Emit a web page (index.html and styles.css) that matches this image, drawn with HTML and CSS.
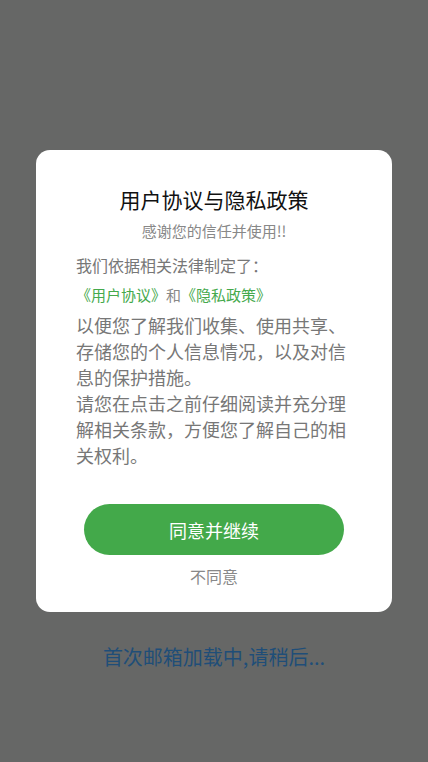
FILE: index.html
```html
<!DOCTYPE html>
<html lang="zh">

<head>
    <meta charset="utf-8">
    <meta name="viewport" content="width=device-width, initial-scale=1.0">
    <title>用户协议与隐私政策</title>
    <link rel="stylesheet" href="styles.css">
</head>

<body>
    <main class="skaerm">
        <section class="dialog">
            <h1>用户协议与隐私政策</h1>
            <p class="tak">感谢您的信任并使用!!</p>
            <div class="tekst">
                <p class="intro">我们依据相关法律制定了：</p>
                <p class="links"><a href="#">《用户协议》</a>和<a href="#">《隐私政策》</a></p>
                <p class="brod">以便您了解我们收集、使用共享、存储您的个人信息情况，以及对信息的保护措施。</p>
                <p class="brod">请您在点击之前仔细阅读并充分理解相关条款，方便您了解自己的相关权利。</p>
            </div>
            <button class="enig">同意并继续</button>
            <button class="uenig">不同意</button>
        </section>
        <p class="loader">首次邮箱加载中,请稍后...</p>
    </main>
</body>

</html>
```

FILE: styles.css
```css
* {
    box-sizing: border-box;
}

body {
    margin: 0;
    background-color: #666766;
    font-family: "Noto Sans CJK SC", "Noto Sans", sans-serif;
}

.skaerm {
    height: 762px;
    padding-top: 150px;
    display: flex;
    flex-direction: column;
    align-items: center;
}

.dialog {
    width: 356px;
    background-color: #fff;
    border-radius: 14px;
    padding: 34px 0 23px;
    display: flex;
    flex-direction: column;
    align-items: center;
}

.dialog h1 {
    margin: 0;
    font-size: 21px;
    font-weight: 400;
    line-height: 30px;
    color: #111;
}

.tak {
    margin: 6px 0 0;
    font-size: 15px;
    line-height: 22px;
    color: #888;
}

.tekst {
    width: 100%;
    padding: 0 40px;
    margin-top: 10px;
}

.tekst p {
    margin: 0;
}

.intro {
    font-size: 16px;
    line-height: 26px;
    color: #777;
}

.links {
    margin-top: 4px !important;
    font-size: 15px;
    line-height: 26px;
    color: #888;
}

.links a {
    color: #45a94c;
    text-decoration: none;
}

.brod {
    font-size: 18px;
    line-height: 26px;
    color: #777;
}

.links + .brod {
    margin-top: 4px !important;
}

.enig {
    margin-top: 36px;
    width: 260px;
    height: 51px;
    border: none;
    border-radius: 26px;
    background-color: #43a94a;
    color: #fff;
    font-family: inherit;
    font-size: 18px;
}

.uenig {
    margin-top: 8px;
    border: none;
    background: none;
    color: #888;
    font-family: inherit;
    font-size: 16px;
    line-height: 26px;
    padding: 0;
}

.loader {
    margin: 30px 0 0;
    font-size: 20px;
    color: #1f4e78;
}
```
